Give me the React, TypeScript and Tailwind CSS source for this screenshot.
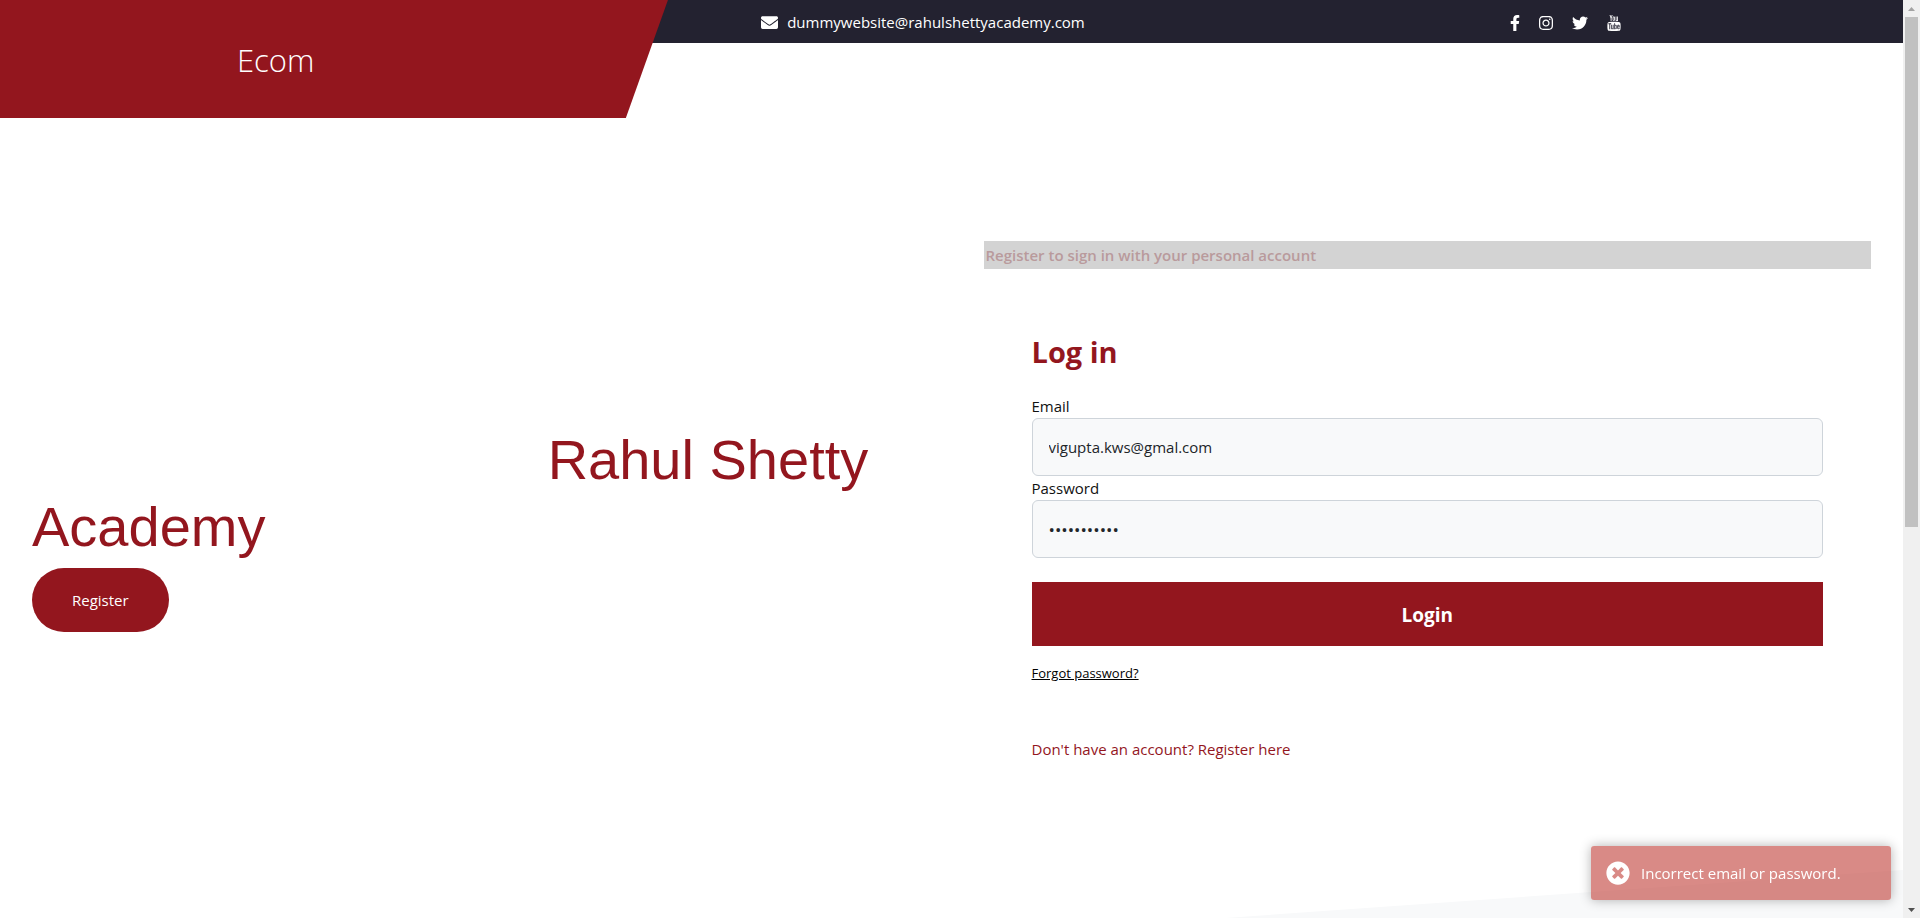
import React from "react";
import {
  FaEnvelope,
  FaFacebookF,
  FaInstagram,
  FaTimesCircle,
  FaTwitter,
} from "react-icons/fa";
import { TfiYoutube } from "react-icons/tfi";

const socials = [
  { name: "Facebook", Icon: FaFacebookF, size: "w-[10px]" },
  { name: "Instagram", Icon: FaInstagram, size: "w-4" },
  { name: "Twitter", Icon: FaTwitter, size: "w-4" },
  { name: "YouTube", Icon: TfiYoutube, size: "w-4" },
];

function Header() {
  return (
    <header className="grid">
      <div className="col-start-1 row-start-1 flex h-[43px] items-center justify-between bg-[#232230] pt-0.5 pr-[281px] pl-[40%] text-white">
        <a
          href="mailto:dummywebsite@rahulshettyacademy.com"
          className="flex items-center gap-[9px] text-[15px]"
        >
          <FaEnvelope className="size-[17px]" aria-hidden="true" />
          dummywebsite@rahulshettyacademy.com
        </a>
        <nav aria-label="Social media" className="flex items-center gap-[18px]">
          {socials.map(({ name, Icon, size }) => (
            <a key={name} href="#" aria-label={name}>
              <Icon className={`h-4 ${size}`} />
            </a>
          ))}
        </nav>
      </div>
      <div className="z-10 col-start-1 row-start-1 flex h-[118px] w-[35.1%] items-center bg-[#93161e] pt-0.5 pl-[237px] [clip-path:polygon(0_0,100%_0,93.7%_100%,0_100%)]">
        <a href="#" className="text-[31px] font-light text-white">
          Ecom
        </a>
      </div>
    </header>
  );
}

function Hero() {
  return (
    <section className="flex flex-1 flex-col items-start px-8 pt-[308px]">
      <h1 className="w-full indent-[58.1%] font-['Liberation_Sans',Arial,sans-serif] text-[56px] leading-[67px] text-[#93161e]">
        Rahul Shetty Academy
      </h1>
      <button
        type="button"
        className="mt-2 h-16 rounded-[32px] bg-[#93161e] px-10 text-[15px] text-white"
      >
        Register
      </button>
    </section>
  );
}

const fieldClass =
  "h-[58px] w-full rounded-md border border-[#ced4da] bg-[#f8f9fa] px-4 text-[#212529] outline-none";

function LoginPanel() {
  return (
    <section className="flex-1 px-8 pt-[123px]">
      <p className="h-7 bg-[#d3d3d3] px-0.5 text-[15px] leading-7 font-semibold text-[#b99a9c]">
        Register to sign in with your personal account
      </p>
      <form
        className="flex flex-col px-12 pt-[61px]"
        onSubmit={(e) => e.preventDefault()}
      >
        <h2 className="text-[29px] leading-[44px] font-bold text-[#93161e]">
          Log in
        </h2>
        <label
          htmlFor="email"
          className="mt-5 text-[15px] leading-6 font-medium text-[#111111]"
        >
          Email
        </label>
        <input
          id="email"
          type="email"
          defaultValue="vigupta.kws@gmal.com"
          className={`${fieldClass} text-[15px]`}
        />
        <label
          htmlFor="password"
          className="text-[15px] leading-6 font-medium text-[#111111]"
        >
          Password
        </label>
        <input
          id="password"
          type="password"
          defaultValue="password123"
          className={`${fieldClass} text-[17px]`}
        />
        <button
          type="submit"
          className="mt-6 h-16 bg-[#93161e] pt-0.5 text-[19px] font-bold text-white"
        >
          Login
        </button>
        <a
          href="#"
          className="mt-[15px] self-start text-[13px] leading-6 text-black underline"
        >
          Forgot password?
        </a>
        <a
          href="#"
          className="mt-[52px] self-start text-[15px] leading-6 text-[#93161e]"
        >
          Don't have an account? Register here
        </a>
      </form>
    </section>
  );
}

function Toast() {
  return (
    <div
      role="alert"
      className="fixed right-[29px] bottom-[18px] flex h-[54px] w-[300px] items-center gap-[11px] rounded-[3px] bg-[#bd362f]/58 px-[15px] text-[15px] text-white shadow-[0_0_12px_rgba(0,0,0,0.3)]"
    >
      <FaTimesCircle className="size-6" aria-hidden="true" />
      Incorrect email or password.
    </div>
  );
}

function ScrollRail() {
  return (
    <div
      aria-hidden="true"
      className="sticky top-0 flex h-screen w-[17px] shrink-0 flex-col items-center justify-between bg-[#f0f0f0]"
    >
      <div className="flex h-[57.4%] w-[13px] flex-col">
        <div className="flex h-[17px] shrink-0 items-center justify-center">
          <svg width="7" height="4" viewBox="0 0 7 4" fill="#a3a3a3">
            <path d="M3.5 0 7 4H0Z" />
          </svg>
        </div>
        <div className="flex-1 bg-[#c1c1c1]" />
      </div>
      <div className="flex h-[17px] items-center justify-center">
        <svg width="7" height="4" viewBox="0 0 7 4" fill="#505050">
          <path d="M0 0H7L3.5 4Z" />
        </svg>
      </div>
    </div>
  );
}

export default function App() {
  return (
    <div className="flex min-h-screen bg-white font-['Open_Sans','Noto_Sans',sans-serif]">
      <div className="relative flex min-w-0 flex-1 flex-col">
        <div className="absolute right-0 bottom-0 h-12 w-[35.6%] bg-[#f8f9fa] [clip-path:polygon(0_100%,100%_0,100%_100%)]" />
        <Header />
        <main className="relative flex">
          <Hero />
          <LoginPanel />
        </main>
      </div>
      <ScrollRail />
      <Toast />
    </div>
  );
}
